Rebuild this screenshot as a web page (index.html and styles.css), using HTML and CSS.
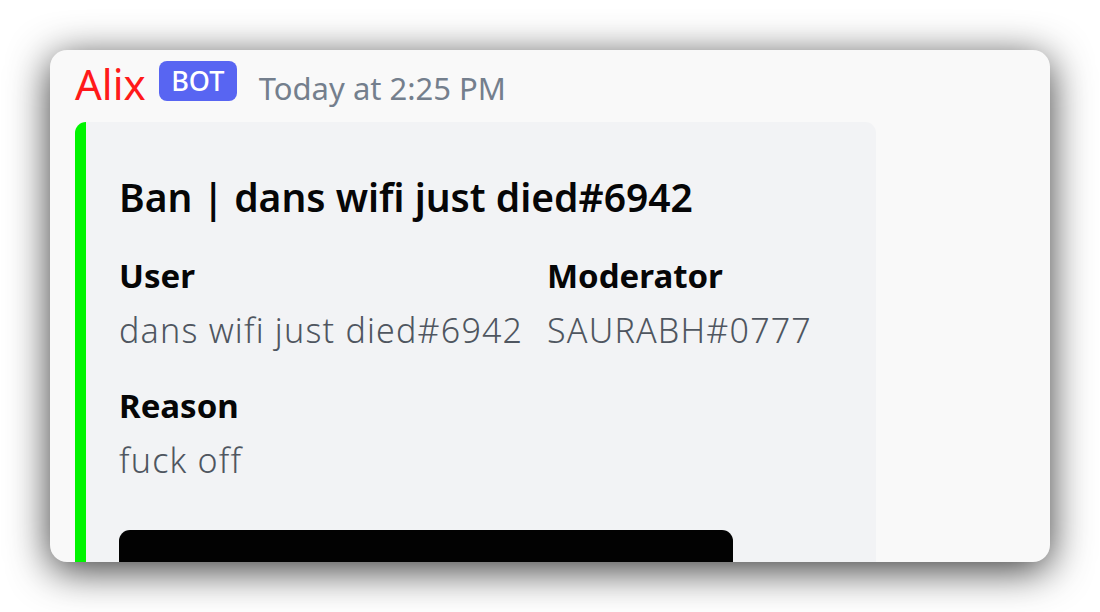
FILE: index.html
```html
<!DOCTYPE html>
<html lang="en">
<head>
<meta charset="utf-8">
<title>Alix ban log</title>
<link rel="stylesheet" href="styles.css">
</head>
<body>
<div class="stage">
  <div class="card">
    <div class="header">
      <span class="author">Alix</span>
      <span class="badge">BOT</span>
      <span class="time">Today at 2:25 PM</span>
    </div>
    <div class="embed">
      <div class="title">Ban | dans wifi just died#6942</div>
      <div class="fields">
        <div class="field">
          <div class="fname">User</div>
          <div class="fvalue">dans wifi just died#6942</div>
        </div>
        <div class="field">
          <div class="fname">Moderator</div>
          <div class="fvalue">SAURABH#0777</div>
        </div>
        <div class="field full">
          <div class="fname">Reason</div>
          <div class="fvalue">fuck off</div>
        </div>
      </div>
      <div class="image"></div>
    </div>
  </div>
</div>
</body>
</html>
```
FILE: styles.css
```css
html, body {
  margin: 0;
  padding: 0;
  background: #ffffff;
}
body {
  font-family: "Noto Sans", "Open Sans", sans-serif;
  width: 1100px;
  height: 612px;
  overflow: hidden;
}
.stage {
  padding: 50px;
}
.card {
  width: 1000px;
  height: 512px;
  background: #f9f9f9;
  border-radius: 17px;
  box-shadow: 0 8px 40px rgba(0, 0, 0, 0.78);
  overflow: hidden;
  box-sizing: border-box;
  padding: 9px 0 0 25px;
}
.header {
  display: flex;
  align-items: baseline;
  height: 50px;
}
.author {
  font-size: 42px;
  line-height: 50px;
  color: #ff1a1a;
}
.badge {
  align-self: center;
  margin: 0 0 6px 13px;
  width: 78px;
  height: 40px;
  border-radius: 8px;
  background: #5865f2;
  color: #ffffff;
  font-size: 27px;
  font-weight: 500;
  line-height: 39px;
  text-align: center;
  box-sizing: border-box;
}
.time {
  margin-left: 22px;
  font-size: 31px;
  line-height: 50px;
  color: #747f8d;
}
.embed {
  margin-top: 13px;
  width: 801px;
  height: 700px;
  box-sizing: border-box;
  background: #f2f3f5;
  border-left: 11px solid #00f500;
  border-radius: 11px;
  padding: 50px 0 0 33px;
}
.title {
  font-size: 39px;
  line-height: 50px;
  font-weight: 600;
  color: #060607;
}
.fields {
  display: grid;
  grid-template-columns: 428px 1fr;
  row-gap: 22px;
  margin-top: 27px;
}
.field.full {
  grid-column: 1 / -1;
}
.fname {
  font-size: 33px;
  line-height: 54px;
  font-weight: 700;
  color: #060607;
}
.fvalue {
  font-size: 34px;
  line-height: 54px;
  font-weight: 300;
  letter-spacing: 1.2px;
  color: #4f5660;
}
.image {
  margin-top: 43px;
  width: 614px;
  height: 300px;
  background: #020202;
  border-radius: 11px;
}
```
